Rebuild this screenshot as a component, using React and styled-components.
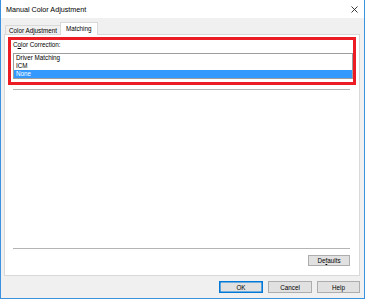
import React from "react";
import styled, { createGlobalStyle } from "styled-components";

const GlobalStyle = createGlobalStyle`
  html, body { margin: 0; padding: 0; background: #fff; }
  body { font-family: "Liberation Sans", Arial, sans-serif; color: #000; }
  * { box-sizing: border-box; }
`;

const Window = styled.div`
  width: 365px;
  height: 299px;
  display: flex;
  flex-direction: column;
  background: #f0f0f0;
  border: 1px solid #3b93e0;
  border-top: none;
`;

const TitleBar = styled.div`
  height: 18px;
  flex: none;
  background: #fff;
  display: flex;
  align-items: center;
  justify-content: space-between;
  padding: 0 6px 0 5px;
  font-size: 7.2px;
`;

const Body = styled.div`
  flex: 1;
  display: flex;
  flex-direction: column;
  padding: 4px 4px 0 3px;
  min-height: 0;
`;

const TabRow = styled.div`
  height: 13px;
  flex: none;
  display: flex;
  align-items: flex-end;
  margin: 0 0 -1px 1px;
  position: relative;
  z-index: 1;
`;

const Tab = styled.div`
  font-size: 6.3px;
  display: flex;
  align-items: center;
  border: 1px solid #d9d9d9;
  border-bottom: none;
  background: ${(p) => (p.$active ? "#fff" : "#f0f0f0")};
  height: ${(p) => (p.$active ? "13px" : "9px")};
  margin-bottom: ${(p) => (p.$active ? "0" : "1px")};
  margin-left: ${(p) => (p.$active ? "-1px" : "0")};
  padding: ${(p) => (p.$active ? "0 5px 2px 5px" : "0 3px")};
`;

const Page = styled.div`
  flex: 1;
  display: flex;
  flex-direction: column;
  background: #fff;
  border: 1px solid #d9d9d9;
  min-height: 0;
`;

const Highlight = styled.div`
  margin: 2px 3px 0 3px;
  border: 3px solid #ec1c24;
  padding: 1px 0 3px 2px;
`;

const Label = styled.div`
  font-size: 6.3px;
  line-height: 8px;
  height: 8px;
`;

const ListBox = styled.div`
  margin-top: 4px;
  border: 1px solid #9d9d9d;
  background: #fff;
`;

const ListItem = styled.div`
  height: 8px;
  line-height: 8px;
  font-size: 6.3px;
  padding-left: 2px;
  background: ${(p) => (p.$selected ? "#3399ff" : "transparent")};
  color: ${(p) => (p.$selected ? "#fff" : "#000")};
`;

const Separator = styled.div`
  height: 1px;
  flex: none;
  background: #b4b4b4;
  margin: ${(p) => p.$margin || "0 9px 0 8px"};
`;

const Spacer = styled.div`
  flex: 1;
`;

const ButtonRow = styled.div`
  display: flex;
  justify-content: flex-end;
  gap: 5px;
  flex: none;
  padding: ${(p) => p.$padding || "0"};
`;

const Button = styled.button`
  width: ${(p) => p.$w || 44}px;
  height: ${(p) => p.$h || 12}px;
  padding: 0;
  font-family: "Liberation Sans", Arial, sans-serif;
  font-size: 6.3px;
  color: #000;
  background: #e1e1e1;
  border: 1px solid ${(p) => (p.$default ? "#0078d7" : "#adadad")};
  box-shadow: ${(p) => (p.$default ? "inset 0 0 0 0.6px #0078d7" : "none")};
  display: flex;
  align-items: center;
  justify-content: center;
`;

const CloseIcon = () => (
  <svg width="7" height="7" viewBox="0 0 7 7">
    <path d="M0.5 0.5 L6.5 6.5 M6.5 0.5 L0.5 6.5" stroke="#222" strokeWidth="0.9" />
  </svg>
);

export default function App() {
  return (
    <>
      <GlobalStyle />
      <Window>
        <TitleBar>
          <span>Manual Color Adjustment</span>
          <CloseIcon />
        </TitleBar>
        <Body>
          <TabRow>
            <Tab>Color Adjustment</Tab>
            <Tab $active>Matching</Tab>
          </TabRow>
          <Page>
            <Highlight>
              <Label>
                C<u>o</u>lor Correction:
              </Label>
              <ListBox>
                <ListItem>Driver Matching</ListItem>
                <ListItem>ICM</ListItem>
                <ListItem $selected>None</ListItem>
              </ListBox>
            </Highlight>
            <Separator $margin="4px 9px 0 8px" />
            <Spacer />
            <Separator />
            <ButtonRow $padding="6px 9px 9px 0">
              <Button $w={42} $h={11}>
                De<u>f</u>aults
              </Button>
            </ButtonRow>
          </Page>
          <ButtonRow $padding="5px 0 5px 0">
            <Button $default>OK</Button>
            <Button>Cancel</Button>
            <Button $w={43}>Help</Button>
          </ButtonRow>
        </Body>
      </Window>
    </>
  );
}
